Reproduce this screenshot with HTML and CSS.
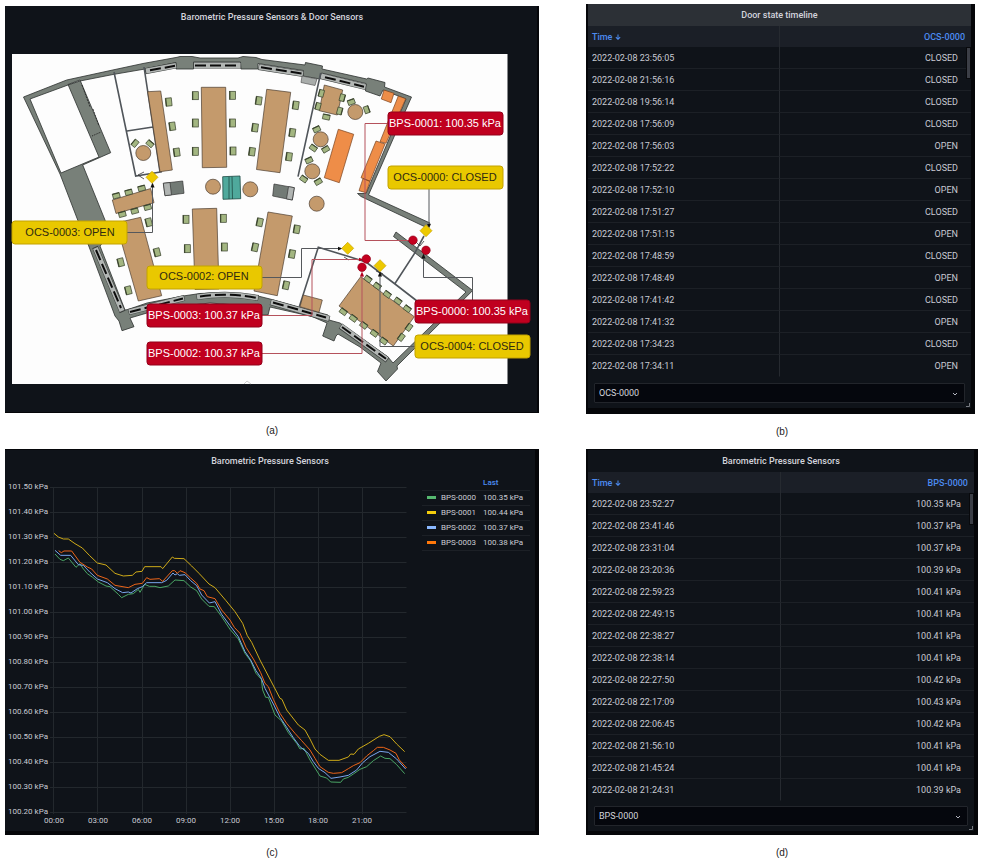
FILE: index.html
```html
<!DOCTYPE html>
<html lang="en">
<head>
<meta charset="utf-8">
<title>Barometric Pressure Sensors &amp; Door Sensors</title>
<link rel="stylesheet" href="styles.css">
</head>
<body>
<main class="board">

<figure class="figure">
  <section class="panel panel-map">
    <h2 class="panel-title">Barometric Pressure Sensors &amp; Door Sensors</h2>
    <svg class="map" viewBox="5 28 534 385" role="img" aria-label="Floor plan with sensors">
      <defs>
        <g id="chair"><rect x="-3" y="-4" width="6" height="8" fill="#a3b681" stroke="#39432d" stroke-width=".7"/><path d="M-2.6-4V4" stroke="#39432d" stroke-width="1.1"/></g>
        <g id="seat"><rect x="-3.5" y="-2.5" width="7" height="5" fill="#a3b681" stroke="#39432d" stroke-width=".7"/><path d="M-3.5-2.2H3.5" stroke="#39432d" stroke-width="1"/></g>
        <path id="diamond" d="M0-6 6 0 0 6-6 0Z" fill="#edc900" stroke="#c9a400" stroke-width=".7"/>
        <marker id="tip" viewBox="0 0 6 6" refX="3" refY="3" markerWidth="5" markerHeight="5" orient="auto"><path d="M0 .5 6 3 0 5.500Z" fill="#111"/></marker>
        <marker id="tip-red" viewBox="0 0 6 6" refX="3" refY="3" markerWidth="5" markerHeight="5" orient="auto"><path d="M0 .5 6 3 0 5.500Z" fill="#b3001e"/></marker>
      </defs>
      <rect x="12" y="54" width="495.500" height="330" fill="#fdfdfd"/>

      <g class="wall">
        <path d="M23.500 97 66.700 80 115 69.500 143 63.500 177 57.300 180 56.500 192 56.500 200 58 238 58 243 56.500 256 57.500 262 59.500 305 65 305.500 62.500 322.500 66 322 69 366.700 79 368 78 385 82.500 384.500 87 411.500 97 368.500 195 430 223 427.500 228 361 196.500 357.500 193.500 366 193.500 406 99 383 90 380 96 365.500 91 366 83.500 321.500 73 320 79 303 76 303.500 70.500 258 63.500 258 69 241 69 240.500 62 193.500 62 193.500 69 176 69 176 62.500 145 69 113 74.500 80 81 68 85 30 99 61 173 99 157 68 84.500 80 80 110.700 152.700 82.700 165 105 220 109 235 100 246 125 310 128 309.500 147 303 183 296 200 293.500 227 292.500 260 296.500 270 299 328 315 329 320 340 323 388 357 393 363 466 292 393.500 236.500 396 232 472.700 290.500 397 366 397.500 369 386 381 377.500 371.500 381 363 360 347 338 334 336 336 334 341 322.700 336 327 323 312 316.500 270 307 268 315 260 315 261 307 210 303 183 306 147 313 130 318 134 326.700 122 330.700 119 321 115 316 88 244 77.700 220 60 174Z"/>
      </g>
      <path class="thin" d="M92 136l9-4"/>
      <path d="M82 85l8 22M93 109l6 17" stroke="#222" stroke-width=".8" stroke-dasharray="2 1" fill="none"/>

      <g class="glass-edge">
        <path d="M145 71.200 176.500 65.300M193.500 65.500H241M258.500 67 303.500 74M320.500 76 366 87.200M95 247 122.500 312M128.500 312 184.500 297.800M196.500 297Q228 292 258.500 298M270.500 302 329.500 318.800M340.500 326 387.500 360"/>
      </g>
      <g class="glass">
        <path d="M146 71 176 65.500M194 65.500H240.500M259 67 303 74M321 76 365.500 87M95.400 248 122 311M129 312 184 298M197 297Q228 292 258 298M271 302 329 318.500M341 326 387 359.500"/>
      </g>
      <g class="slots">
        <path d="M150 70.300 175 65.800M195 65.500H239M261 67.300 302 73.600M325 77.200 364 86.700M96 250 121 308M130 312 183 298.500M200 296.500Q228 292.500 256 297.700M273 302.500 326 317.500M342 327 386 358.800"/>
      </g>
      <path d="M302 76l15 3-2 6.500-14-3Z" fill="#a9adab" stroke="#444" stroke-width=".6"/>

      <g class="partition">
        <path d="M114 72 135.700 176 162 171.700M144 67 160 172M127 131 153 127M320.700 73 298 176.700"/>
        <path d="M299.300 306.700 318.300 247.300 347 256 366 262 395 284 417 301M395 283.500 415 252.700 424 236"/>
      </g>
      <path d="M144 172l-6 3 6 4M344 257l5 3M416 242l4 4 4-5M376 271l7 3" stroke="#333" stroke-width=".8" fill="none"/>

      <g class="wood">
        <path d="M147.700 91.700 160.700 91 172.300 170 160 171.700ZM201.300 87.300H225.700L226.700 167.300 202.300 167.700ZM266.700 89.300 290.700 92.300 280 172.700 256.500 169.500ZM116 223 140.700 217.300 161.700 295.700 138.300 301ZM192.300 209 216.700 208.300 219 289 195 289.500ZM268 212 292.300 216 277.300 295.700 254 291ZM112.300 200 150.700 188.500 154 202.700 116 213.500ZM324.300 85 342.700 90 337.300 115 319.300 110.700ZM360.700 276.700 414.300 316.700 393.300 346 339 306ZM303.300 295 322.300 300 319 312.300 300 306.700Z"/>
        <circle cx="143.300" cy="153" r="7.500"/><circle cx="213" cy="186.700" r="7.500"/><circle cx="250.300" cy="189.300" r="7.500"/>
        <circle cx="355.300" cy="112" r="7.500"/><circle cx="320.700" cy="139.300" r="7.500"/><circle cx="312.300" cy="171.300" r="7.500"/><circle cx="316.700" cy="203.700" r="7.500"/>
      </g>
      <g class="orange">
        <path d="M338.300 129.300 353.700 134.300 339.300 182.700 324.300 177.700ZM384 90 394 93.300 391 102.700 381.300 99ZM398.300 96 405.700 98.700 386 143.300 380 141.700ZM376 141 385 144 370 181.300 361 177.700ZM363 178.500 370 181.300 366 192.700 359 190.700Z"/>
      </g>
      <path d="M222.700 176.700 240 176 240.700 198.700 223 199.300Z" fill="#4fa99c" stroke="#1e4a44" stroke-width=".8"/>
      <path d="M229 176.700V199M232 176.500 232.500 199" stroke="#1e4a44" stroke-width=".8"/>
      <path d="M163.300 183.300 182.700 181 184 193.300 165 195.700ZM274 184 294.300 187.700 292.300 200 272.700 196Z" fill="#727a75" stroke="#333" stroke-width=".7"/>
      <path d="M163.300 183.300 170 182.500 171.500 194.900 165 195.700ZM288.500 186.600 294.300 187.700 292.300 200 286.500 198.900Z" fill="#b0b4b2" stroke="#333" stroke-width=".7"/>

      <g>
        <use href="#chair" transform="translate(168.700 102) rotate(-6)"/><use href="#chair" transform="translate(172.300 126.300) rotate(-8)"/><use href="#chair" transform="translate(176.700 152.300) rotate(-8)"/>
        <use href="#chair" x="195.300" y="95.700"/><use href="#chair" x="195.300" y="123"/><use href="#chair" x="195.300" y="151.300"/>
        <use href="#chair" x="232.500" y="95.300"/><use href="#chair" x="232.500" y="123"/><use href="#chair" x="233" y="151"/>
        <use href="#chair" transform="translate(258.700 100.700) rotate(8)"/><use href="#chair" transform="translate(255 127.700) rotate(8)"/><use href="#chair" transform="translate(252 151.700) rotate(8)"/>
        <use href="#chair" transform="translate(295.700 105.300) rotate(8)"/><use href="#chair" transform="translate(292.300 132.700) rotate(8)"/><use href="#chair" transform="translate(289 156.700) rotate(8)"/>
        <use href="#chair" transform="translate(148.700 222.300) rotate(-14)"/><use href="#chair" transform="translate(157 252.300) rotate(-14)"/><use href="#chair" transform="translate(120.700 262.300) rotate(-14)"/><use href="#chair" transform="translate(128.300 290.300) rotate(-14)"/>
        <use href="#chair" x="186" y="219.300"/><use href="#chair" x="187.300" y="248.700"/><use href="#chair" x="223.300" y="218.300"/><use href="#chair" x="224.300" y="247"/>
        <use href="#chair" transform="translate(259.700 222.300) rotate(12)"/><use href="#chair" transform="translate(255 247.300) rotate(12)"/>
        <use href="#chair" transform="translate(296.700 229.300) rotate(10)"/><use href="#chair" transform="translate(292 254) rotate(10)"/><use href="#chair" transform="translate(286 285.300) rotate(12)"/>
        <use href="#seat" transform="translate(135 143.300) rotate(-50)"/><use href="#seat" transform="translate(150 143.700) rotate(40)"/>
        <use href="#seat" transform="translate(116.300 195.700) rotate(-15)"/><use href="#seat" transform="translate(128.700 192.300) rotate(-15)"/><use href="#seat" transform="translate(141.700 188.300) rotate(-15)"/>
        <use href="#seat" transform="translate(122.300 214.300) rotate(-15)"/><use href="#seat" transform="translate(134.700 211) rotate(-15)"/><use href="#seat" transform="translate(147.700 207.300) rotate(-15)"/>
        <use href="#seat" transform="translate(321.300 93.300) rotate(-75)"/><use href="#seat" transform="translate(318 106.300) rotate(-75)"/><use href="#seat" transform="translate(342.300 97.700) rotate(105)"/><use href="#seat" transform="translate(339.700 111) rotate(105)"/><use href="#seat" transform="translate(326.300 117) rotate(12)"/>
        <use href="#seat" transform="translate(351.300 102) rotate(-20)"/><use href="#seat" transform="translate(366.700 109.700) rotate(70)"/>
        <use href="#seat" transform="translate(316.700 129.300) rotate(-25)"/><use href="#seat" transform="translate(313.300 148) rotate(35)"/><use href="#seat" transform="translate(325.700 149.300) rotate(-30)"/>
        <use href="#seat" transform="translate(309 160.300) rotate(-25)"/><use href="#seat" transform="translate(303.700 179) rotate(35)"/><use href="#seat" transform="translate(318.300 181.700) rotate(-30)"/>
        <use href="#seat" transform="translate(368 279) rotate(36)"/><use href="#seat" transform="translate(377.300 286) rotate(36)"/><use href="#seat" transform="translate(387.300 294.300) rotate(36)"/><use href="#seat" transform="translate(398 301) rotate(36)"/><use href="#seat" transform="translate(407.300 308.700) rotate(36)"/>
        <use href="#seat" transform="translate(409 327.300) rotate(-54)"/><use href="#seat" transform="translate(401.300 337.300) rotate(-54)"/>
        <use href="#seat" transform="translate(383.700 341) rotate(36)"/><use href="#seat" transform="translate(374.300 333.300) rotate(36)"/><use href="#seat" transform="translate(363.700 325.300) rotate(36)"/><use href="#seat" transform="translate(353.300 318.300) rotate(36)"/><use href="#seat" transform="translate(343.300 311.700) rotate(36)"/>
      </g>

      <g class="link">
        <path d="M127 232.500H152.500V185" marker-end="url(#tip)"/>
        <path d="M261.500 277.500H301.500V248.500H340" marker-end="url(#tip)"/>
        <path d="M415 346.500H380V274" marker-end="url(#tip)"/>
        <path d="M472.500 300V277.500H423.500V256" marker-end="url(#tip)"/>
        <path d="M429 189V226" marker-end="url(#tip)"/>
      </g>
      <g class="link link-red">
        <path d="M388 123.500H365V240.500H409"/>
        <path d="M261.500 315.500H312V259.500H361" marker-end="url(#tip-red)"/>
        <path d="M261.500 353.500H362V274" marker-end="url(#tip-red)"/>
      </g>
      <use href="#diamond" x="152" y="177.300"/><use href="#diamond" x="426" y="230.700"/><use href="#diamond" x="347.700" y="248.300"/><use href="#diamond" x="380" y="265.700"/>
      <g fill="#c4001f" stroke="#94001a" stroke-width=".7"><circle cx="413" cy="240.200" r="4.200"/><circle cx="426" cy="250.300" r="4.200"/><circle cx="366.300" cy="259" r="4.200"/><circle cx="362" cy="267.300" r="4.200"/></g>

      <g class="tag tag-red">
        <rect x="388" y="112" width="115" height="23" rx="3"/><text x="445" y="127">BPS-0001: 100.35 kPa</text>
        <rect x="147" y="304" width="115" height="23" rx="3"/><text x="204" y="319">BPS-0003: 100.37 kPa</text>
        <rect x="147" y="342" width="115" height="23" rx="3"/><text x="204" y="357">BPS-0002: 100.37 kPa</text>
        <rect x="415" y="300" width="115" height="23" rx="3"/><text x="472" y="315">BPS-0000: 100.35 kPa</text>
      </g>
      <g class="tag tag-yellow">
        <rect x="388" y="166" width="115" height="23" rx="3"/><text x="445" y="181">OCS-0000: CLOSED</text>
        <rect x="12" y="221" width="115" height="23" rx="3"/><text x="70" y="236">OCS-0003: OPEN</text>
        <rect x="147" y="266" width="115" height="23" rx="3"/><text x="204" y="280">OCS-0002: OPEN</text>
        <rect x="415" y="335" width="115" height="23" rx="3"/><text x="472" y="350">OCS-0004: CLOSED</text>
      </g>
      <path d="M244 384l3-3 4 3" stroke="#ccc" fill="none"/>
    </svg>
  </section>
  <figcaption>(a)</figcaption>
</figure>

<figure class="figure">
  <section class="panel panel-list panel-door">
    <h2 class="panel-title title-hover">Door state timeline</h2>
    <div class="scroll">
      <table class="log">
        <thead><tr><th><button type="button">Time <svg class="arrow" viewBox="0 0 7 7"><path d="M3.500 .5V6M1 3.700 3.500 6.200 6 3.700"/></svg></button></th><th><button type="button">OCS-0000</button></th></tr></thead>
        <tbody>
          <tr><td>2022-02-08 23:56:05</td><td>CLOSED</td></tr>
          <tr><td>2022-02-08 21:56:16</td><td>CLOSED</td></tr>
          <tr><td>2022-02-08 19:56:14</td><td>CLOSED</td></tr>
          <tr><td>2022-02-08 17:56:09</td><td>CLOSED</td></tr>
          <tr><td>2022-02-08 17:56:03</td><td>OPEN</td></tr>
          <tr><td>2022-02-08 17:52:22</td><td>CLOSED</td></tr>
          <tr><td>2022-02-08 17:52:10</td><td>OPEN</td></tr>
          <tr><td>2022-02-08 17:51:27</td><td>CLOSED</td></tr>
          <tr><td>2022-02-08 17:51:15</td><td>OPEN</td></tr>
          <tr><td>2022-02-08 17:48:59</td><td>CLOSED</td></tr>
          <tr><td>2022-02-08 17:48:49</td><td>OPEN</td></tr>
          <tr><td>2022-02-08 17:41:42</td><td>CLOSED</td></tr>
          <tr><td>2022-02-08 17:41:32</td><td>OPEN</td></tr>
          <tr><td>2022-02-08 17:34:23</td><td>CLOSED</td></tr>
          <tr><td>2022-02-08 17:34:11</td><td>OPEN</td></tr>
        </tbody>
      </table>
      <span class="thumb"></span>
    </div>
    <div class="picker">
      <select aria-label="Door sensor"><option>OCS-0000</option></select>
      <svg class="chevron" viewBox="0 0 6 4"><path d="M1 1 3 3 5 1"/></svg>
    </div>
    <svg class="grip" viewBox="0 0 4 4"><path d="M3.500 0V3.500H0"/></svg>
  </section>
  <figcaption>(b)</figcaption>
</figure>

<figure class="figure">
  <section class="panel panel-chart">
    <h2 class="panel-title">Barometric Pressure Sensors</h2>
    <div class="chart-row">
      <svg class="chart" viewBox="5 472 407 359" role="img" aria-label="Pressure over the day">
        <path class="grid" d="M50 487.500H406.500M50 512.500H406.500M50 537.500H406.500M50 562.500H406.500M50 587.500H406.500M50 612.500H406.500M50 637.500H406.500M50 662.500H406.500M50 687.500H406.500M50 712.500H406.500M50 737.500H406.500M50 762.500H406.500M50 787.500H406.500M50 812.500H406.500M53.500 487V814M97.500 487V814M142.500 487V814M186.500 487V814M230.500 487V814M274.500 487V814M318.500 487V814M362.500 487V814"/>
        <g class="axis axis-y">
          <text x="48" y="489">101.50 kPa</text><text x="48" y="514">101.40 kPa</text><text x="48" y="539">101.30 kPa</text><text x="48" y="564">101.20 kPa</text><text x="48" y="589">101.10 kPa</text><text x="48" y="614">101.00 kPa</text><text x="48" y="639">100.90 kPa</text><text x="48" y="664">100.80 kPa</text><text x="48" y="689">100.70 kPa</text><text x="48" y="714">100.60 kPa</text><text x="48" y="739">100.50 kPa</text><text x="48" y="764">100.40 kPa</text><text x="48" y="789">100.30 kPa</text><text x="48" y="814">100.20 kPa</text>
        </g>
        <g class="axis axis-x">
          <text x="54" y="823">00:00</text><text x="98" y="823">03:00</text><text x="142" y="823">06:00</text><text x="186" y="823">09:00</text><text x="230" y="823">12:00</text><text x="274" y="823">15:00</text><text x="318" y="823">18:00</text><text x="362" y="823">21:00</text>
        </g>
        <g class="series" transform="translate(0 440) scale(.33333)">
          <polyline stroke="#4aa564" points="165,342 180,358 190,362 205,354 228,382 240,371 248,384 262,401 278,412 295,426 318,438 330,440 355,463 365,473 385,463 400,461 415,448 420,457 434,433 448,439 465,439 480,443 505,438 525,420 552,422 572,441 590,452 605,477 627,499 643,500 665,530 690,568 715,597 735,640 752,663 768,700 784,718 788,750 797,772 805,772 825,825 845,843 865,878 890,910 900,927 912,925 930,960 960,1008 980,1014 992,1026 1022,1027 1030,1017 1045,1012 1060,1002 1080,988 1100,980 1120,962 1142,948 1155,955 1170,956 1190,974 1214,1001"/>
          <polyline stroke="#7aa7ee" points="165,331 182,346 212,346 235,374 250,376 270,397 292,417 322,428 345,446 368,458 385,456 393,459 412,446 427,440 440,428 485,428 500,421 519,399 525,405 532,401 538,406 555,404 572,422 590,437 605,465 628,489 645,485 665,523 690,557 715,590 735,635 752,660 768,692 784,715 795,745 820,792 840,832 860,862 880,893 900,920 925,940 940,965 955,985 975,998 993,1015 1020,1011 1045,1006 1070,990 1088,968 1110,950 1140,934 1165,937 1190,957 1217,987"/>
          <polyline stroke="#ed6418" points="176,332 184,338 192,333 215,333 240,367 262,381 275,387 292,406 322,417 345,436 385,443 405,433 427,430 440,413 450,418 478,416 488,424 517,392 524,392 532,400 540,392 555,398 572,414 590,430 600,447 612,452 622,470 645,476 665,510 690,540 703,562 720,580 738,622 762,660 782,698 795,730 805,740 820,778 840,820 860,850 885,880 905,902 930,930 945,955 960,980 985,997 1000,1000 1025,998 1045,986 1060,977 1080,968 1100,948 1120,932 1132,922 1150,922 1170,930 1188,940 1198,960 1220,984"/>
          <polyline stroke="#cfab18" points="162,280 175,291 190,297 205,297 225,311 247,324 268,346 292,369 318,375 345,400 370,408 397,406 408,396 426,394 434,380 483,380 488,386 517,351 523,355 552,356 575,378 597,400 627,432 645,443 678,482 705,515 728,550 742,587 755,607 780,660 805,708 840,775 846,778 860,810 895,855 915,870 930,897 945,927 960,943 985,961 1017,961 1045,951 1052,942 1062,943 1075,927 1105,910 1138,889 1152,884 1170,890 1190,912 1214,935"/>
        </g>
      </svg>
      <div class="legend-box">
        <table class="legend">
          <thead><tr><th></th><th>Last</th></tr></thead>
          <tbody>
            <tr><td><i class="key key-green"></i>BPS-0000</td><td>100.35 kPa</td></tr>
            <tr><td><i class="key key-yellow"></i>BPS-0001</td><td>100.44 kPa</td></tr>
            <tr><td><i class="key key-blue"></i>BPS-0002</td><td>100.37 kPa</td></tr>
            <tr><td><i class="key key-orange"></i>BPS-0003</td><td>100.38 kPa</td></tr>
          </tbody>
        </table>
      </div>
    </div>
  </section>
  <figcaption>(c)</figcaption>
</figure>

<figure class="figure">
  <section class="panel panel-list panel-pressure">
    <h2 class="panel-title">Barometric Pressure Sensors</h2>
    <div class="scroll">
      <table class="log">
        <thead><tr><th><button type="button">Time <svg class="arrow" viewBox="0 0 7 7"><path d="M3.500 .5V6M1 3.700 3.500 6.200 6 3.700"/></svg></button></th><th><button type="button">BPS-0000</button></th></tr></thead>
        <tbody>
          <tr><td>2022-02-08 23:52:27</td><td>100.35 kPa</td></tr>
          <tr><td>2022-02-08 23:41:46</td><td>100.37 kPa</td></tr>
          <tr><td>2022-02-08 23:31:04</td><td>100.37 kPa</td></tr>
          <tr><td>2022-02-08 23:20:36</td><td>100.39 kPa</td></tr>
          <tr><td>2022-02-08 22:59:23</td><td>100.41 kPa</td></tr>
          <tr><td>2022-02-08 22:49:15</td><td>100.41 kPa</td></tr>
          <tr><td>2022-02-08 22:38:27</td><td>100.41 kPa</td></tr>
          <tr><td>2022-02-08 22:38:14</td><td>100.41 kPa</td></tr>
          <tr><td>2022-02-08 22:27:50</td><td>100.42 kPa</td></tr>
          <tr><td>2022-02-08 22:17:09</td><td>100.43 kPa</td></tr>
          <tr><td>2022-02-08 22:06:45</td><td>100.42 kPa</td></tr>
          <tr><td>2022-02-08 21:56:10</td><td>100.41 kPa</td></tr>
          <tr><td>2022-02-08 21:45:24</td><td>100.41 kPa</td></tr>
          <tr><td>2022-02-08 21:24:31</td><td>100.39 kPa</td></tr>
        </tbody>
      </table>
      <span class="thumb"></span>
    </div>
    <div class="picker">
      <select aria-label="Pressure sensor"><option>BPS-0000</option></select>
      <svg class="chevron" viewBox="0 0 6 4"><path d="M1 1 3 3 5 1"/></svg>
    </div>
    <svg class="grip" viewBox="0 0 4 4"><path d="M3.500 0V3.500H0"/></svg>
  </section>
  <figcaption>(d)</figcaption>
</figure>

</main>
</body>
</html>
```
FILE: styles.css
```css
* { box-sizing: border-box; }

body {
  margin: 0;
  background: #fff;
  color: #c9cad3;
  font: 9px/12px Roboto, "Liberation Sans", sans-serif;
}

.board {
  display: grid;
  grid-template-columns: 534fr 392fr;
  column-gap: 47px;
  align-items: center;
  padding: 4px 5px 0;
}

.figure { margin: 0; min-width: 0; }

figcaption {
  height: 35px;
  color: #222;
  font: 10px/36px "Liberation Sans", Arial, sans-serif;
  text-align: center;
}

.panel {
  position: relative;
  background: #0f1319;
  border: 0 solid #050609;
}

.panel-title {
  margin: 0;
  height: 22px;
  color: #d3d4dc;
  font-size: 9px;
  font-weight: 500;
  line-height: 22px;
  text-align: center;
}

.title-hover { background: #2c3036; }

.panel-map { box-shadow: inset -2px -1px #050609; }
.panel-chart { border-width: 1px 4px 4px 0; }
.panel-list { border-left-width: 2px; border-right-width: 4px; }
.panel-door { margin-right: 3px; border-bottom-width: 6px; }
.panel-pressure { border-top-width: 1px; border-bottom-width: 4px; }

/* floor plan */
.map { display: block; width: 100%; height: auto; }
.wall { fill: #788079; fill-rule: evenodd; stroke: #2c302e; stroke-width: .8; }
.thin { stroke: #222; stroke-dasharray: 1 1; }
.glass-edge { fill: none; stroke: #3a3e3c; stroke-width: 6; }
.glass { fill: none; stroke: #b2b6b4; stroke-width: 5; }
.slots { fill: none; stroke: #0c0c0c; stroke-width: 2; stroke-dasharray: 11 4; }
.partition { fill: none; stroke: #50555a; stroke-width: 1.600; }
.wood { fill: #c49a6c; stroke: #4c3e30; stroke-width: .7; }
.orange { fill: #ee8d48; stroke: #7a4420; stroke-width: .7; }
.link { fill: none; stroke: #55585c; stroke-width: 1; }
.link-red { stroke: #b5525c; }
.tag text {
  font: 11px "Liberation Sans", Arial, sans-serif;
  text-anchor: middle;
}
.tag-red rect { fill: #c0001f; stroke: #93001a; }
.tag-red text { fill: #fff; }
.tag-yellow rect { fill: #e9c800; stroke: #c2a200; }
.tag-yellow text { fill: #2f2a10; }

/* log tables */
.scroll { position: relative; }
.log {
  width: 100%;
  table-layout: fixed;
  border-collapse: separate;
  border-spacing: 0;
}
.log th, .log td { padding: 0 4px; text-align: left; }
.log th { height: 21px; background: #1b1f27; }
.log td { height: 22px; border-bottom: 1px solid #1c2026; }
.log tr > :first-child { border-right: 1px solid #262a30; }
.log th:last-child { padding-right: 6px; text-align: right; }
.log td:last-child { padding-right: 13px; text-align: right; }
.log tbody tr:last-child td { border-bottom-color: transparent; }
.log button {
  padding: 0;
  border: 0;
  background: none;
  color: #4c8bf0;
  font: inherit;
  font-weight: 500;
}
.arrow { width: 6px; height: 6px; fill: none; stroke: #4c8bf0; stroke-width: 1.200; }

.thumb {
  position: absolute;
  top: 21px;
  right: 0;
  width: 5px;
  height: 32px;
  border: 1px solid #08090c;
  background: #3b3e46;
}

.picker {
  position: relative;
  margin: 5px 6px 0;
  padding-bottom: 5px;
}
.panel-door .picker { margin-top: 6px; }
.picker select {
  display: block;
  width: 100%;
  height: 20px;
  padding: 0 4px;
  appearance: none;
  border: 1px solid #22252b;
  border-radius: 1px;
  background: #05070d;
  color: #d3d4dc;
  font: inherit;
}
.chevron {
  position: absolute;
  top: 9px;
  right: 7px;
  width: 6px;
  height: 4px;
  fill: none;
  stroke: #b5b7c0;
}
.grip {
  position: absolute;
  right: 1px;
  bottom: 1px;
  width: 4px;
  height: 4px;
  fill: none;
  stroke: #777a80;
}

/* chart */
.chart-row { display: grid; grid-template-columns: 407fr 123fr; }
.chart { display: block; width: 100%; height: auto; }
.grid { fill: none; stroke: #23282d; stroke-width: 1; }
.axis { fill: #c9cad3; font-size: 8px; }
.axis-y { text-anchor: end; }
.axis-x { text-anchor: middle; }
.series { fill: none; stroke-width: 3; stroke-linejoin: round; }

.legend-box { padding: 4px 5px 0 10px; }
.legend {
  width: 100%;
  border-spacing: 0;
  font-size: 8px;
  white-space: nowrap;
}
.legend th, .legend td {
  height: 15px;
  padding: 0 5px;
  border-bottom: 1px solid #1c2026;
  text-align: left;
}
.legend td:first-child { padding-right: 0; }
.legend th { color: #4c8bf0; font-weight: 500; }
.key {
  display: inline-block;
  width: 9px;
  height: 3px;
  margin-right: 5px;
  vertical-align: middle;
}
.key-green { background: #56b870; }
.key-yellow { background: #f2cc0c; }
.key-blue { background: #8ab8ff; }
.key-orange { background: #ff780a; }
```
